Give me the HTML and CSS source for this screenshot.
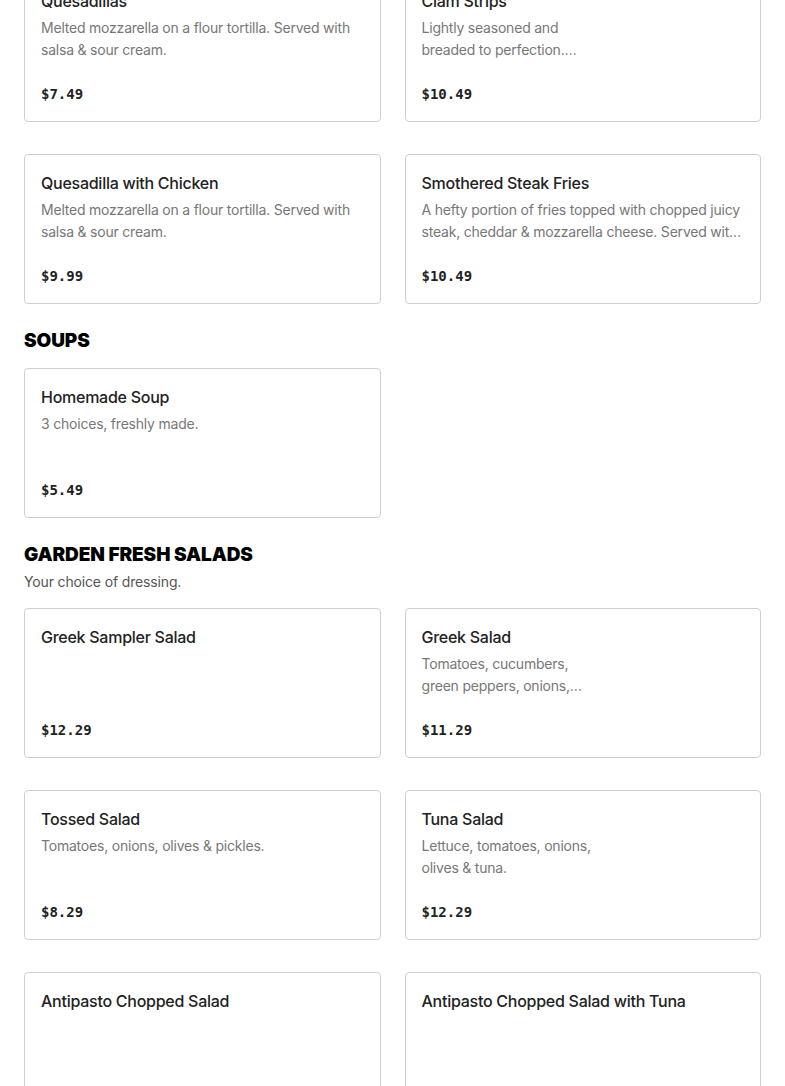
FILE: index.html
```html
<!DOCTYPE html>
<html lang="en">
<head>
<meta charset="utf-8">
<title>Menu</title>
<link rel="stylesheet" href="styles.css">
</head>
<body>
<main class="menu">
  <section class="section section-first">
    <div class="grid">
      <article class="card">
        <h3 class="item-name">Quesadillas</h3>
        <p class="item-desc">Melted mozzarella on a flour tortilla. Served with salsa &amp; sour cream.</p>
        <div class="item-price">$7.49</div>
      </article>
      <article class="card">
        <h3 class="item-name">Clam Strips</h3>
        <p class="item-desc narrow">Lightly seasoned and breaded to perfection. Served with tartar sauce &amp; lemon.</p>
        <div class="item-price">$10.49</div>
      </article>
      <article class="card">
        <h3 class="item-name">Quesadilla with Chicken</h3>
        <p class="item-desc">Melted mozzarella on a flour tortilla. Served with salsa &amp; sour cream.</p>
        <div class="item-price">$9.99</div>
      </article>
      <article class="card">
        <h3 class="item-name">Smothered Steak Fries</h3>
        <p class="item-desc">A hefty portion of fries topped with chopped juicy steak, cheddar &amp; mozzarella cheese. Served with sour cream.</p>
        <div class="item-price">$10.49</div>
      </article>
    </div>
  </section>

  <section class="section">
    <header class="section-head">
      <h2 class="section-title">SOUPS</h2>
    </header>
    <div class="grid">
      <article class="card">
        <h3 class="item-name">Homemade Soup</h3>
        <p class="item-desc">3 choices, freshly made.</p>
        <div class="item-price">$5.49</div>
      </article>
    </div>
  </section>

  <section class="section">
    <header class="section-head">
      <h2 class="section-title">GARDEN FRESH SALADS</h2>
      <p class="section-sub">Your choice of dressing.</p>
    </header>
    <div class="grid">
      <article class="card">
        <h3 class="item-name">Greek Sampler Salad</h3>
        <div class="item-price">$12.29</div>
      </article>
      <article class="card">
        <h3 class="item-name">Greek Salad</h3>
        <p class="item-desc narrow">Tomatoes, cucumbers, green peppers, onions, olives, feta cheese &amp; stuffed grape leaves.</p>
        <div class="item-price">$11.29</div>
      </article>
      <article class="card">
        <h3 class="item-name">Tossed Salad</h3>
        <p class="item-desc">Tomatoes, onions, olives &amp; pickles.</p>
        <div class="item-price">$8.29</div>
      </article>
      <article class="card">
        <h3 class="item-name">Tuna Salad</h3>
        <p class="item-desc narrow">Lettuce, tomatoes, onions, olives &amp; tuna.</p>
        <div class="item-price">$12.29</div>
      </article>
      <article class="card">
        <h3 class="item-name">Antipasto Chopped Salad</h3>
        <div class="item-price">$13.29</div>
      </article>
      <article class="card">
        <h3 class="item-name">Antipasto Chopped Salad with Tuna</h3>
        <div class="item-price">$14.29</div>
      </article>
    </div>
  </section>
</main>
</body>
</html>
```

FILE: styles.css
```css
* {
  box-sizing: border-box;
}

html, body {
  margin: 0;
  padding: 0;
  background: #fff;
}

body {
  font-family: Inter, "Noto Sans", "Liberation Sans", sans-serif;
  color: #222;
  overflow: hidden;
}

.menu {
  padding: 0 24px;
}

.section-first {
  margin-top: -28px;
}

.section {
  margin-bottom: 23px;
}

.section-head {
  padding-bottom: 13px;
}

.section-title {
  margin: 0;
  font-family: Inter, "Noto Sans", sans-serif;
  font-weight: 900;
  font-size: 19px;
  line-height: 28px;
  color: #000;
  letter-spacing: -0.1px;
}

.section-sub {
  margin: 2px 0 2px;
  font-size: 14px;
  line-height: 22px;
  color: #555;
  letter-spacing: -0.15px;
}

.grid {
  display: grid;
  grid-template-columns: 1fr 1fr;
  column-gap: 24px;
  row-gap: 32px;
}

.card {
  height: 150px;
  border: 1px solid #cfcfcf;
  border-radius: 4px;
  padding: 16px;
  display: flex;
  flex-direction: column;
  background: #fff;
}

.item-name {
  margin: 0;
  font-size: 16px;
  line-height: 24px;
  font-weight: 500;
  color: #222;
  letter-spacing: -0.26px;
}

.item-desc {
  margin: 4px 0 0;
  font-size: 14px;
  line-height: 22px;
  color: #777;
  letter-spacing: -0.21px;
  display: -webkit-box;
  -webkit-line-clamp: 2;
  -webkit-box-orient: vertical;
  overflow: hidden;
}

.item-desc.narrow {
  max-width: 180px;
}

.item-price {
  margin-top: auto;
  font-family: "DejaVu Sans Mono", "Liberation Mono", monospace;
  font-weight: 700;
  font-size: 14px;
  line-height: 22px;
  color: #222;
}
```
